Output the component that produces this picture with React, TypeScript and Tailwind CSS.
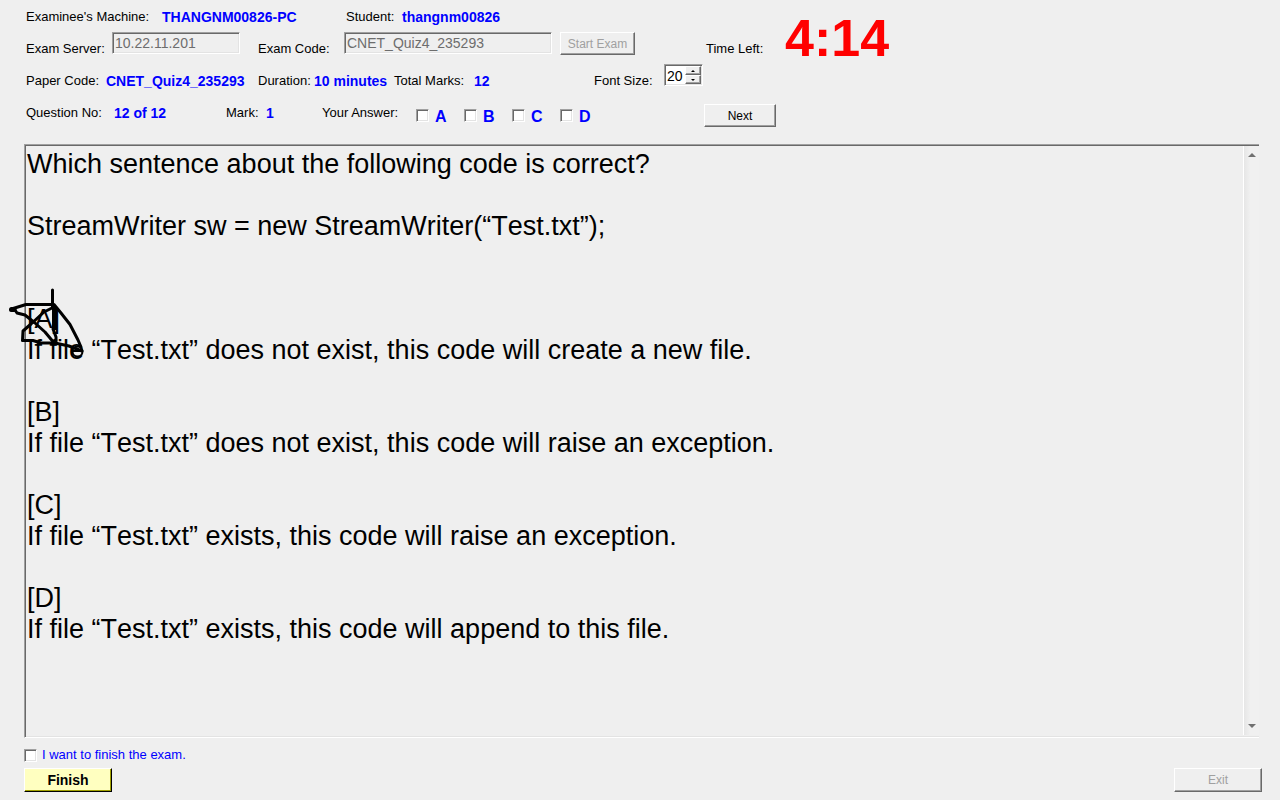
import { useState, type ReactNode } from "react";

const QUESTION = `Which sentence about the following code is correct?

StreamWriter sw = new StreamWriter(“Test.txt”);


[A]
If file “Test.txt” does not exist, this code will create a new file.

[B]
If file “Test.txt” does not exist, this code will raise an exception.

[C]
If file “Test.txt” exists, this code will raise an exception.

[D]
If file “Test.txt” exists, this code will append to this file.`;

const raised =
  "border border-t-white border-l-white border-r-[#696969] border-b-[#696969] shadow-[inset_-1px_-1px_0_#a0a0a0] bg-[#efefef]";
const sunken =
  "border border-t-[#a0a0a0] border-l-[#a0a0a0] border-r-white border-b-white shadow-[inset_1px_1px_0_#696969,inset_-1px_-1px_0_#e3e3e3]";
const box = `${sunken} size-[13px] shrink-0 appearance-none bg-white checked:bg-[#0000ff]`;
const field = `${sunken} h-[22px] bg-[#efefef] pl-[2px] text-[14px] leading-4 text-[#6d6d6d]`;

function Caption({ className, children }: { className: string; children: ReactNode }) {
  return <span className={`shrink-0 whitespace-nowrap pt-[9px] ${className}`}>{children}</span>;
}

function Value({ className = "", children }: { className?: string; children: ReactNode }) {
  return (
    <span className={`shrink-0 whitespace-nowrap pt-[9px] text-[14px] font-bold text-[#0000ff] ${className}`}>
      {children}
    </span>
  );
}

function Arrow({ up = false, className }: { up?: boolean; className: string }) {
  return (
    <svg viewBox="0 0 8 4" className={className} aria-hidden="true">
      <path d={up ? "M0 4 L4 0 L8 4Z" : "M0 0 L4 4 L8 0Z"} fill="currentColor" />
    </svg>
  );
}

export default function App() {
  const [fontSize, setFontSize] = useState(20);

  return (
    <main className="flex min-h-screen flex-col bg-[#efefef] pb-2 pl-6 pr-[18px] font-['Liberation_Sans',Arial,sans-serif] text-[13px] leading-4 text-black">
      <header className="pl-[2px]">
        <div className="flex">
          <div className="w-[680px] shrink-0">
            <div className="flex h-8">
              <Caption className="w-[136px]">Examinee's Machine:</Caption>
              <Value className="w-[184px]">THANGNM00826-PC</Value>
              <Caption className="w-14">Student:</Caption>
              <Value>thangnm00826</Value>
            </div>
            <div className="flex h-8 items-start">
              <label htmlFor="server" className="w-[86px] shrink-0 whitespace-nowrap pt-[9px]">
                Exam Server:
              </label>
              <input id="server" disabled defaultValue="10.22.11.201" className={`${field} w-32`} />
              <label htmlFor="code" className="ml-[18px] w-[86px] shrink-0 whitespace-nowrap pt-[9px]">
                Exam Code:
              </label>
              <input id="code" disabled defaultValue="CNET_Quiz4_235293" className={`${field} w-52`} />
              <button disabled className={`${raised} ml-2 h-[23px] w-[75px] text-[12px] text-[#a0a0a0]`}>
                Start Exam
              </button>
            </div>
          </div>
          <span className="w-[79px] shrink-0 whitespace-nowrap pt-[41px]">Time Left:</span>
          <time className="pt-3 text-[52px] font-bold leading-[52px] text-[#ff0000]">4:14</time>
        </div>

        <div className="flex h-8 items-start">
          <Caption className="w-20">Paper Code:</Caption>
          <Value className="w-[152px]">CNET_Quiz4_235293</Value>
          <Caption className="w-14">Duration:</Caption>
          <Value className="w-20">10 minutes</Value>
          <Caption className="w-20">Total Marks:</Caption>
          <Value className="w-[120px]">12</Value>
          <label htmlFor="size" className="w-[70px] shrink-0 whitespace-nowrap pt-[9px]">
            Font Size:
          </label>
          <div className={`${sunken} flex h-[22px] w-[39px] bg-white`}>
            <input
              id="size"
              type="text"
              inputMode="numeric"
              value={fontSize}
              onChange={(e) => setFontSize(Number(e.target.value) || 0)}
              className="w-5 bg-transparent pl-[2px] pt-[2px] text-[14px] leading-4 outline-none"
            />
            <div className="flex flex-1 flex-col py-px pr-px">
              <button
                aria-label="Increase font size"
                onClick={() => setFontSize(fontSize + 1)}
                className={`${raised} flex flex-1 items-center justify-center`}
              >
                <Arrow up className="h-[2px] w-1" />
              </button>
              <button
                aria-label="Decrease font size"
                onClick={() => setFontSize(fontSize - 1)}
                className={`${raised} flex flex-1 items-center justify-center`}
              >
                <Arrow className="h-[2px] w-1" />
              </button>
            </div>
          </div>
        </div>

        <div className="flex h-8 items-start">
          <Caption className="w-[88px]">Question No:</Caption>
          <Value className="w-28">12 of 12</Value>
          <Caption className="w-10">Mark:</Caption>
          <Value className="w-14">1</Value>
          <Caption className="w-[94px]">Your Answer:</Caption>
          <div className="flex w-72 pt-[13px]">
            {["A", "B", "C", "D"].map((letter) => (
              <label key={letter} className="flex w-12 gap-[6px] text-[16px] font-bold text-[#0000ff]">
                <input type="checkbox" className={box} />
                {letter}
              </label>
            ))}
          </div>
          <button className={`${raised} mt-2 h-[23px] w-[72px] text-[12px]`}>Next</button>
        </div>
      </header>

      <section className="relative mr-[3px] mt-4 flex flex-1 border-b border-l border-t border-b-white border-l-[#a0a0a0] border-t-[#a0a0a0] shadow-[inset_1px_1px_0_#696969,inset_0_-1px_0_#e3e3e3]">
        <textarea
          readOnly
          aria-label="Question"
          defaultValue={QUESTION}
          className="block flex-1 resize-none overflow-hidden bg-transparent pl-[2px] pt-1 text-[27px] leading-[31px] outline-none [font-kerning:none]"
        />
        <div className="mb-[2px] mt-px flex w-4 flex-col items-center justify-between border-l border-l-white bg-linear-to-r from-[#e6e6e6] to-[#f0f0f0] to-40% py-[7px] text-[#707070]">
          <Arrow up className="h-1 w-2" />
          <Arrow className="h-1 w-2" />
        </div>
        <svg
          viewBox="0 0 90 80"
          className="pointer-events-none absolute -left-[25px] top-[135px] h-20 w-[90px]"
          fill="none"
          stroke="black"
          strokeWidth="3"
          strokeLinecap="round"
          strokeLinejoin="round"
          aria-hidden="true"
        >
          <path d="M52.500 10V27" />
          <path d="M11.500 29L26 24.500H54L61 33L70 44.500L78 60L81 67" />
          <path d="M11 30H15L17 33L25 35L35 43L45 52L55 64" />
          <path d="M54 27L44 32L31 44L23 51L22.500 60.500H33L41 63H55L69 66L82 71" />
          <path d="M54.500 28V50" strokeWidth="5" strokeLinecap="butt" />
          <path d="M53 49L56 57V63" />
          <path d="M11.500 29.500H14" strokeWidth="5" />
          <circle cx="77.500" cy="71.500" r="5" strokeWidth="2" />
        </svg>
      </section>

      <footer className="mt-[9px]">
        <label className="flex w-fit items-center gap-[5px] text-[#0000ff]">
          <input type="checkbox" className={box} />
          I want to finish the exam.
        </label>
        <div className="mt-[5px] flex justify-between">
          <button className="h-6 w-[88px] border border-b-black border-l-white border-r-black border-t-white bg-[#ffffc0] text-[14px] font-bold shadow-[inset_-1px_-1px_0_#a0a000]">
            Finish
          </button>
          <button disabled className={`${raised} h-6 w-[88px] text-[12px] text-[#a0a0a0]`}>
            Exit
          </button>
        </div>
      </footer>
    </main>
  );
}
